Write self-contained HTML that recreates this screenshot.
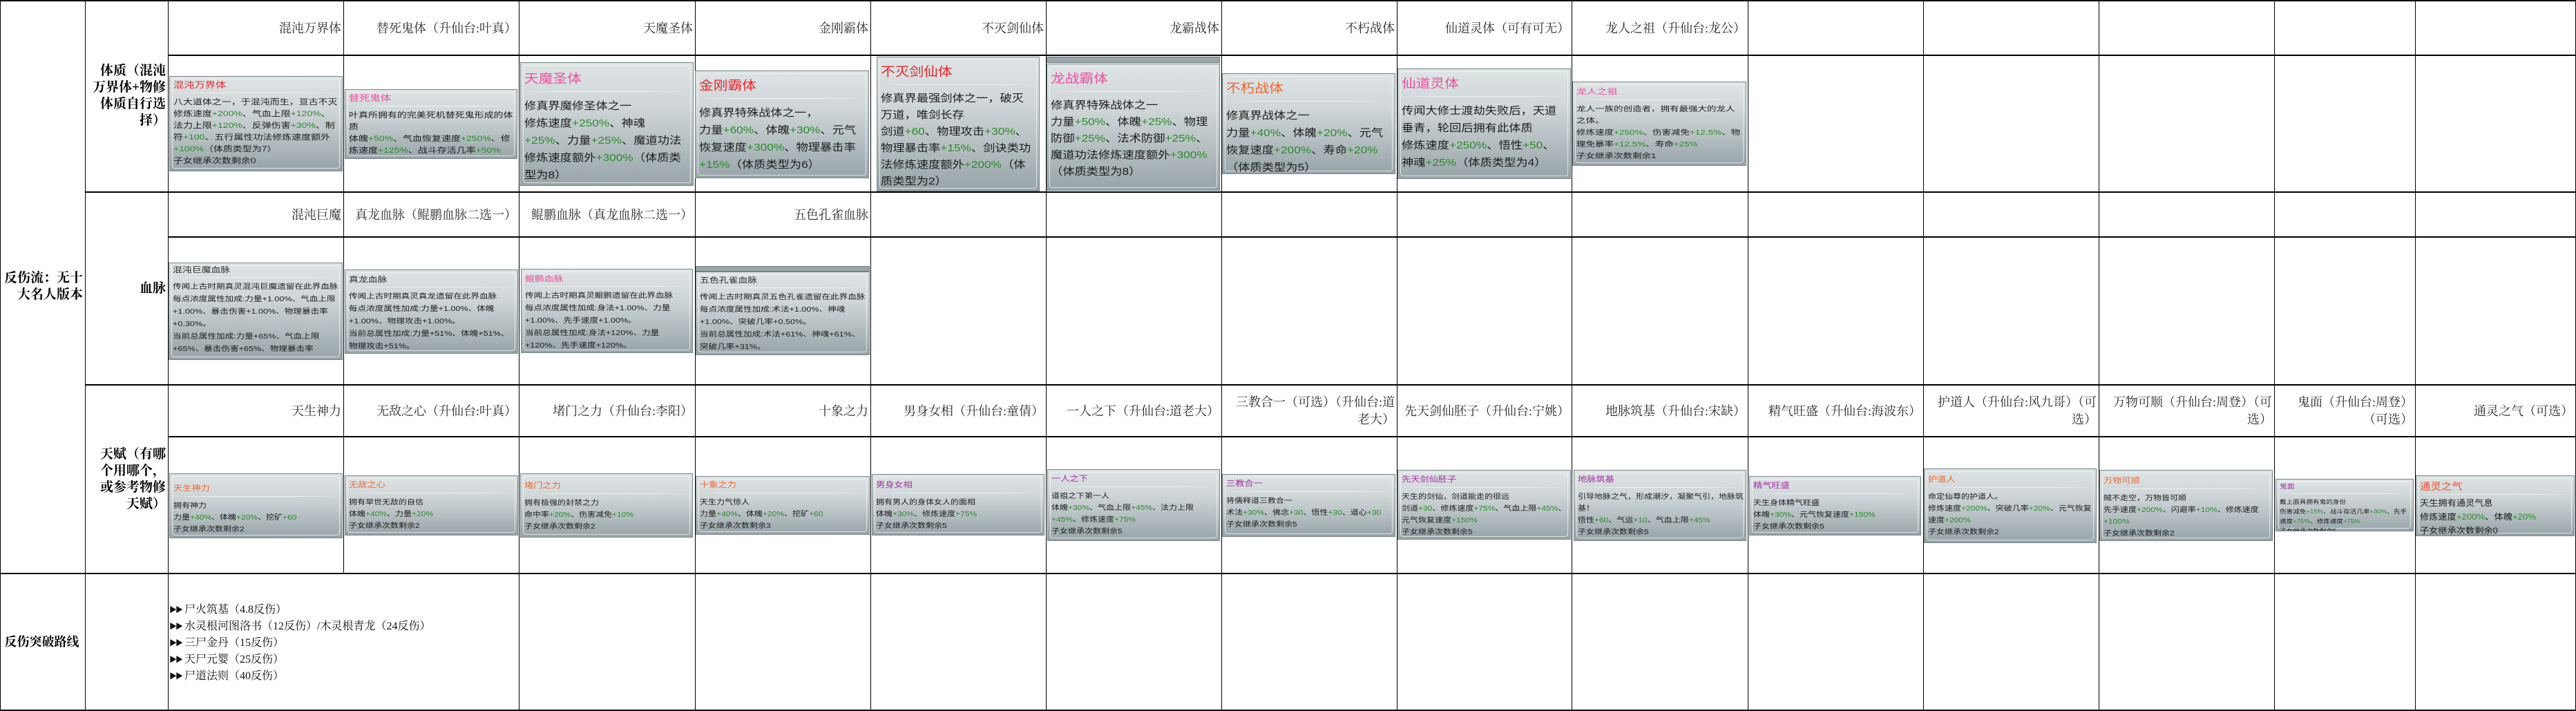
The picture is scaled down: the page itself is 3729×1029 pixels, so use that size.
<!DOCTYPE html>
<html><head><meta charset="utf-8">
<style>
html,body{margin:0;padding:0;background:#fff}
body{width:3729px;height:1029px;position:relative;overflow:hidden;font-family:"Liberation Serif","Noto Serif CJK SC",serif}
.v{position:absolute;width:1px;background:#000}
.h{position:absolute;height:2px;background:#000}
.hd{position:absolute;display:flex;align-items:center;justify-content:flex-end;text-align:right;font-size:18px;line-height:25px;color:#2b2b2b;padding-right:3px;box-sizing:border-box}
.lb{position:absolute;display:flex;align-items:center;justify-content:flex-end;text-align:right;font-weight:bold;font-size:19px;line-height:24px;color:#000;padding-right:3px;box-sizing:border-box}
.card{position:absolute;background:linear-gradient(#dfe4e5 0%,#cfd6d8 35%,#b2bcbf 70%,#98a4a8 100%);border:1px solid #7a878b;overflow:hidden;box-sizing:border-box}
.card:before{content:"";position:absolute;left:3px;top:3px;right:3px;bottom:3px;border:1px solid rgba(240,246,246,.75);border-radius:4px}
.in{position:absolute;left:5px;top:3px;transform-origin:0 0;font-family:"Liberation Sans","Noto Sans CJK SC",sans-serif;color:#1c1c1c}
.sep{height:1px;background:linear-gradient(90deg,rgba(240,244,244,0),#eef2f2 20%,#eef2f2 75%,rgba(240,244,244,0));margin:2px 0 5px}
g{color:#278c27}
.r{color:#e8242c}.p{color:#ee4f9f}.o{color:#f2662e}.u{color:#a62da4}.d{color:#2a2a2a}
.strip{position:absolute;background:#9aa6aa;border:1px solid #6f7c80;box-sizing:border-box}
.list{position:absolute;left:245px;top:871px;font-size:16px;line-height:24px;color:#111}
.list b{font-size:11px;letter-spacing:-2px;margin-right:4px;vertical-align:1px}
</style></head><body>

<!-- grid -->
<div class="v" style="left:0;top:0;height:1029px"></div>
<div class="v" style="left:123px;top:0;height:1029px"></div>
<div class="v" style="left:243px;top:0;height:1029px"></div>
<div class="v" style="left:497px;top:0;height:830px"></div>
<div class="v" style="left:751px;top:0;height:1029px"></div>
<div class="v" style="left:1006px;top:0;height:1029px"></div>
<div class="v" style="left:1260px;top:0;height:1029px"></div>
<div class="v" style="left:1514px;top:0;height:1029px"></div>
<div class="v" style="left:1768px;top:0;height:1029px"></div>
<div class="v" style="left:2022px;top:0;height:1029px"></div>
<div class="v" style="left:2275px;top:0;height:1029px"></div>
<div class="v" style="left:2530px;top:0;height:1029px"></div>
<div class="v" style="left:2784px;top:0;height:1029px"></div>
<div class="v" style="left:3038px;top:0;height:1029px"></div>
<div class="v" style="left:3292px;top:0;height:1029px"></div>
<div class="v" style="left:3496px;top:0;height:1029px"></div>
<div class="v" style="left:3728px;top:0;height:1029px"></div>

<div class="h" style="left:0;top:0;width:3729px"></div>
<div class="h" style="left:243px;top:79px;width:3486px"></div>
<div class="h" style="left:123px;top:277px;width:3606px"></div>
<div class="h" style="left:243px;top:342px;width:3486px"></div>
<div class="h" style="left:123px;top:556px;width:3606px"></div>
<div class="h" style="left:243px;top:631px;width:3486px"></div>
<div class="h" style="left:0;top:829px;width:3729px"></div>
<div class="h" style="left:0;top:1027px;width:3729px"></div>

<!-- labels -->
<div class="lb" style="left:1px;top:0;width:122px;height:830px">反伤流：无十<br>大名人版本</div>
<div class="lb" style="left:124px;top:0;width:119px;height:278px">体质（混沌<br>万界体+物修<br>体质自行选<br>择）</div>
<div class="lb" style="left:124px;top:278px;width:119px;height:279px">血脉</div>
<div class="lb" style="left:124px;top:557px;width:119px;height:273px">天赋（有哪<br>个用哪个，<br>或参考物修<br>天赋）</div>
<div class="lb" style="left:1px;top:830px;width:122px;height:198px;justify-content:center;font-size:18px">反伤突破路线</div>

<!-- headers row1 -->
<div class="hd" style="left:244px;top:2px;width:253px;height:78px">混沌万界体</div>
<div class="hd" style="left:498px;top:2px;width:253px;height:78px">替死鬼体（升仙台:叶真）</div>
<div class="hd" style="left:752px;top:2px;width:254px;height:78px">天魔圣体</div>
<div class="hd" style="left:1007px;top:2px;width:253px;height:78px">金刚霸体</div>
<div class="hd" style="left:1261px;top:2px;width:253px;height:78px">不灭剑仙体</div>
<div class="hd" style="left:1515px;top:2px;width:253px;height:78px">龙霸战体</div>
<div class="hd" style="left:1769px;top:2px;width:253px;height:78px">不朽战体</div>
<div class="hd" style="left:2023px;top:2px;width:252px;height:78px">仙道灵体（可有可无）</div>
<div class="hd" style="left:2276px;top:2px;width:254px;height:78px">龙人之祖（升仙台:龙公）</div>

<!-- headers row2 -->
<div class="hd" style="left:244px;top:279px;width:253px;height:64px">混沌巨魔</div>
<div class="hd" style="left:498px;top:279px;width:253px;height:64px">真龙血脉（鲲鹏血脉二选一）</div>
<div class="hd" style="left:752px;top:279px;width:254px;height:64px">鲲鹏血脉（真龙血脉二选一）</div>
<div class="hd" style="left:1007px;top:279px;width:253px;height:64px">五色孔雀血脉</div>

<!-- headers row3 -->
<div class="hd" style="left:244px;top:558px;width:253px;height:74px">天生神力</div>
<div class="hd" style="left:498px;top:558px;width:253px;height:74px">无敌之心（升仙台:叶真）</div>
<div class="hd" style="left:752px;top:558px;width:254px;height:74px">堵门之力（升仙台:李阳）</div>
<div class="hd" style="left:1007px;top:558px;width:253px;height:74px">十象之力</div>
<div class="hd" style="left:1261px;top:558px;width:253px;height:74px">男身女相（升仙台:童倩）</div>
<div class="hd" style="left:1515px;top:558px;width:253px;height:74px">一人之下（升仙台:道老大）</div>
<div class="hd" style="left:1769px;top:558px;width:253px;height:74px">三教合一（可选）（升仙台:道<br>老大）</div>
<div class="hd" style="left:2023px;top:558px;width:252px;height:74px">先天剑仙胚子（升仙台:宁姚）</div>
<div class="hd" style="left:2276px;top:558px;width:254px;height:74px">地脉筑基（升仙台:宋缺）</div>
<div class="hd" style="left:2531px;top:558px;width:253px;height:74px">精气旺盛（升仙台:海波东）</div>
<div class="hd" style="left:2785px;top:558px;width:253px;height:74px">护道人（升仙台:风九哥）（可<br>选）</div>
<div class="hd" style="left:3039px;top:558px;width:253px;height:74px">万物可顺（升仙台:周登）（可<br>选）</div>
<div class="hd" style="left:3293px;top:558px;width:203px;height:74px">鬼面（升仙台:周登）<br>（可选）</div>
<div class="hd" style="left:3497px;top:558px;width:231px;height:74px">通灵之气（可选）</div>

<!-- row1 cards -->
<div class="card" style="left:245px;top:110px;width:251px;height:138px"><div class="in" style="width:190px;transform:scaleX(1.27);font-size:11px;line-height:17px"><div class="r" style="font-size:12px;line-height:18px">混沌万界体</div><div class="sep"></div>八大道体之一，于混沌而生，亘古不灭<br>修炼速度<g>+200%</g>、气血上限<g>+120%</g>、法力上限<g>+120%</g>、反弹伤害<g>+30%</g>、制符<g>+100</g>、五行属性功法修炼速度额外<g>+100%</g>（体质类型为7）<br>子女继承次数剩余0</div></div>

<div class="card" style="left:499px;top:129px;width:250px;height:101px"><div class="in" style="width:190px;transform:scaleX(1.27);font-size:11px;line-height:17px"><div class="p" style="font-size:12px;line-height:18px">替死鬼体</div><div class="sep"></div>叶真所拥有的完美死机替死鬼形成的体质<br>体魄<g>+50%</g>、气血恢复速度<g>+250%</g>、修炼速度<g>+125%</g>、战斗存活几率<g>+50%</g><br>子女继承次数剩余1</div></div>

<div class="card" style="left:753px;top:90px;width:251px;height:179px"><div class="in" style="width:205px;transform:scaleX(1.15);font-size:15px;line-height:25px;top:6px"><div class="p" style="font-size:18px;line-height:34px">天魔圣体</div><div class="sep" style="margin:1px 0 8px"></div>修真界魔修圣体之一<br>修炼速度<g>+250%</g>、神魂<g>+25%</g>、力量<g>+25%</g>、魔道功法修炼速度额外<g>+300%</g>（体质类型为8）</div></div>

<div class="card" style="left:1006px;top:102px;width:252px;height:156px"><div class="in" style="width:205px;transform:scaleX(1.15);font-size:15px;line-height:25px;top:4px"><div class="r" style="font-size:18px;line-height:34px">金刚霸体</div><div class="sep" style="margin:1px 0 8px"></div>修真界特殊战体之一，<br>力量<g>+60%</g>、体魄<g>+30%</g>、元气恢复速度<g>+300%</g>、物理暴击率<g>+15%</g>（体质类型为6）</div></div>

<div class="card" style="left:1269px;top:82px;width:236px;height:195px"><div class="in" style="width:192px;transform:scaleX(1.15);font-size:15px;line-height:24px;top:4px"><div class="r" style="font-size:18px;line-height:34px">不灭剑仙体</div><div class="sep" style="margin:1px 0 8px"></div>修真界最强剑体之一，破灭万道，唯剑长存<br>剑道<g>+60</g>、物理攻击<g>+30%</g>、物理暴击率<g>+15%</g>、剑诀类功法修炼速度额外<g>+200%</g>（体质类型为2）</div></div>

<div class="strip" style="left:1515px;top:82px;width:251px;height:9px"></div>
<div class="card" style="left:1515px;top:92px;width:251px;height:184px"><div class="in" style="width:205px;transform:scaleX(1.15);font-size:15px;line-height:24px;top:4px"><div class="p" style="font-size:18px;line-height:34px">龙战霸体</div><div class="sep" style="margin:1px 0 8px"></div>修真界特殊战体之一<br>力量<g>+50%</g>、体魄<g>+25%</g>、物理防御<g>+25%</g>、法术防御<g>+25%</g>、魔道功法修炼速度额外<g>+300%</g>（体质类型为8）</div></div>

<div class="card" style="left:1769px;top:106px;width:251px;height:146px"><div class="in" style="width:205px;transform:scaleX(1.15);font-size:15px;line-height:25px;top:4px"><div class="o" style="font-size:18px;line-height:34px">不朽战体</div><div class="sep" style="margin:1px 0 8px"></div>修真界战体之一<br>力量<g>+40%</g>、体魄<g>+20%</g>、元气恢复速度<g>+200%</g>、寿命<g>+20%</g>（体质类型为5）</div></div>

<div class="card" style="left:2023px;top:99px;width:251px;height:160px"><div class="in" style="width:205px;transform:scaleX(1.15);font-size:15px;line-height:25px;top:4px"><div class="p" style="font-size:18px;line-height:34px">仙道灵体</div><div class="sep" style="margin:1px 0 8px"></div>传闻大修士渡劫失败后，天道垂青，轮回后拥有此体质<br>修炼速度<g>+250%</g>、悟性<g>+50</g>、神魂<g>+25%</g>（体质类型为4）</div></div>

<div class="card" style="left:2276px;top:118px;width:252px;height:122px"><div class="in" style="width:178px;transform:scaleX(1.35);font-size:10px;line-height:17px;top:5px"><div class="p" style="font-size:11px;line-height:18px">龙人之祖</div><div class="sep"></div>龙人一族的创造者，拥有最强大的龙人之体。<br>修炼速度<g>+250%</g>、伤害减免<g>+12.5%</g>、物理免暴率<g>+12.5%</g>、寿命<g>+25%</g><br>子女继承次数剩余1</div></div>

<!-- row2 cards -->
<div class="card" style="left:244px;top:380px;width:252px;height:141px"><div class="in" style="width:192px;transform:scaleX(1.26);font-size:10px;line-height:18px;top:2px"><div class="d" style="font-size:11px;line-height:16px">混沌巨魔血脉</div><div class="sep"></div>传闻上古时期真灵混沌巨魔遗留在此界血脉<br>每点浓度属性加成:力量+1.00%、气血上限+1.00%、暴击伤害+1.00%、物理暴击率+0.30%。<br>当前总属性加成:力量+65%、气血上限+65%、暴击伤害+65%、物理暴击率</div></div>

<div class="card" style="left:499px;top:390px;width:251px;height:122px"><div class="in" style="width:192px;transform:scaleX(1.26);font-size:10px;line-height:18px;top:6px"><div class="d" style="font-size:11px;line-height:16px">真龙血脉</div><div class="sep"></div>传闻上古时期真灵真龙遗留在此界血脉<br>每点浓度属性加成:力量+1.00%、体魄+1.00%、物理攻击+1.00%。<br>当前总属性加成:力量+51%、体魄+51%、物理攻击+51%。</div></div>

<div class="card" style="left:754px;top:389px;width:249px;height:122px"><div class="in" style="width:190px;transform:scaleX(1.26);font-size:10px;line-height:18px;top:6px"><div class="p" style="font-size:11px;line-height:16px">鲲鹏血脉</div><div class="sep"></div>传闻上古时期真灵鲲鹏遗留在此界血脉<br>每点浓度属性加成:身法+1.00%、力量+1.00%、先手速度+1.00%。<br>当前总属性加成:身法+120%、力量+120%、先手速度+120%。</div></div>

<div class="strip" style="left:1007px;top:385px;width:252px;height:8px"></div>
<div class="card" style="left:1007px;top:393px;width:252px;height:121px"><div class="in" style="width:192px;transform:scaleX(1.26);font-size:10px;line-height:18px;top:4px"><div class="d" style="font-size:11px;line-height:16px">五色孔雀血脉</div><div class="sep"></div>传闻上古时期真灵五色孔雀遗留在此界血脉<br>每点浓度属性加成:术法+1.00%、神魂+1.00%、突破几率+0.50%。<br>当前总属性加成:术法+61%、神魂+61%、突破几率+31%。</div></div>

<!-- row3 cards -->
<div class="card" style="left:245px;top:685px;width:251px;height:94px"><div class="in" style="width:200px;transform:scaleX(1.2);font-size:10px;line-height:17px;top:12px"><div class="o" style="font-size:11px;line-height:18px">天生神力</div><div class="sep"></div>拥有神力<br>力量<g>+40%</g>、体魄<g>+20%</g>、挖矿<g>+60</g><br>子女继承次数剩余2</div></div>

<div class="card" style="left:499px;top:688px;width:251px;height:87px"><div class="in" style="width:200px;transform:scaleX(1.2);font-size:10px;line-height:17px;top:4px"><div class="o" style="font-size:11px;line-height:18px">无敌之心</div><div class="sep"></div>拥有举世无敌的自信<br>体魄<g>+40%</g>、力量<g>+20%</g><br>子女继承次数剩余2</div></div>

<div class="card" style="left:753px;top:685px;width:250px;height:93px"><div class="in" style="width:200px;transform:scaleX(1.2);font-size:10px;line-height:17px;top:8px"><div class="o" style="font-size:11px;line-height:18px">堵门之力</div><div class="sep"></div>拥有极强的封禁之力<br>命中率<g>+20%</g>、伤害减免<g>+10%</g><br>子女继承次数剩余2</div></div>

<div class="card" style="left:1007px;top:689px;width:252px;height:85px"><div class="in" style="width:200px;transform:scaleX(1.2);font-size:10px;line-height:17px;top:3px"><div class="o" style="font-size:11px;line-height:18px">十象之力</div><div class="sep"></div>天生力气惊人<br>力量<g>+40%</g>、体魄<g>+20%</g>、挖矿<g>+60</g><br>子女继承次数剩余3</div></div>

<div class="card" style="left:1262px;top:686px;width:250px;height:89px"><div class="in" style="width:200px;transform:scaleX(1.2);font-size:10px;line-height:17px;top:6px"><div class="u" style="font-size:11px;line-height:18px">男身女相</div><div class="sep"></div>拥有男人的身体女人的面相<br>体魄<g>+30%</g>、修炼速度<g>+75%</g><br>子女继承次数剩余5</div></div>

<div class="card" style="left:1516px;top:679px;width:250px;height:104px"><div class="in" style="width:200px;transform:scaleX(1.2);font-size:10px;line-height:17px;top:4px"><div class="u" style="font-size:11px;line-height:18px">一人之下</div><div class="sep"></div>道祖之下第一人<br>体魄<g>+30%</g>、气血上限<g>+45%</g>、法力上限<g>+45%</g>、修炼速度<g>+75%</g><br>子女继承次数剩余5</div></div>

<div class="card" style="left:1769px;top:686px;width:251px;height:91px"><div class="in" style="width:200px;transform:scaleX(1.2);font-size:10px;line-height:17px;top:4px"><div class="u" style="font-size:11px;line-height:18px">三教合一</div><div class="sep"></div>将儒释道三教合一<br>术法<g>+30%</g>、佛念<g>+30</g>、悟性<g>+30</g>、道心<g>+30</g><br>子女继承次数剩余5</div></div>

<div class="card" style="left:2023px;top:680px;width:251px;height:101px"><div class="in" style="width:200px;transform:scaleX(1.2);font-size:10px;line-height:17px;top:4px"><div class="u" style="font-size:11px;line-height:18px">先天剑仙胚子</div><div class="sep"></div>天生的剑仙，剑道能走的很远<br>剑道<g>+30</g>、修炼速度<g>+75%</g>、气血上限<g>+45%</g>、元气恢复速度<g>+150%</g><br>子女继承次数剩余5</div></div>

<div class="card" style="left:2278px;top:680px;width:250px;height:103px"><div class="in" style="width:200px;transform:scaleX(1.2);font-size:10px;line-height:17px;top:4px"><div class="u" style="font-size:11px;line-height:18px">地脉筑基</div><div class="sep"></div>引导地脉之气，形成潮汐，凝聚气引，地脉筑基！<br>悟性<g>+60</g>、气运<g>+10</g>、气血上限<g>+45%</g><br>子女继承次数剩余5</div></div>

<div class="card" style="left:2532px;top:689px;width:249px;height:86px"><div class="in" style="width:199px;transform:scaleX(1.2);font-size:10px;line-height:17px;top:4px"><div class="u" style="font-size:11px;line-height:18px">精气旺盛</div><div class="sep"></div>天生身体精气旺盛<br>体魄<g>+30%</g>、元气恢复速度<g>+150%</g><br>子女继承次数剩余5</div></div>

<div class="card" style="left:2785px;top:678px;width:250px;height:108px"><div class="in" style="width:200px;transform:scaleX(1.2);font-size:10px;line-height:17px;top:6px"><div class="o" style="font-size:11px;line-height:18px">护道人</div><div class="sep"></div>命定仙尊的护道人。<br>修炼速度<g>+200%</g>、突破几率<g>+20%</g>、元气恢复速度<g>+200%</g><br>子女继承次数剩余2</div></div>

<div class="card" style="left:3039px;top:680px;width:251px;height:103px"><div class="in" style="width:200px;transform:scaleX(1.2);font-size:10px;line-height:17px;top:6px"><div class="o" style="font-size:11px;line-height:18px">万物可顺</div><div class="sep"></div>贼不走空，万物皆可顺<br>先手速度<g>+200%</g>、闪避率<g>+10%</g>、修炼速度<g>+100%</g><br>子女继承次数剩余2</div></div>

<div class="card" style="left:3294px;top:693px;width:200px;height:76px"><div class="in" style="width:158px;transform:scaleX(1.2);font-size:8px;line-height:14px;top:3px"><div class="u" style="font-size:9px;line-height:15px">鬼面</div><div class="sep"></div>戴上面具拥有鬼的身份<br>伤害减免<g>+15%</g>、战斗存活几率<g>+30%</g>、先手速度<g>+75%</g>、修炼速度<g>+75%</g><br>子女继承次数剩余5</div></div>

<div class="card" style="left:3497px;top:688px;width:230px;height:88px"><div class="in" style="width:200px;transform:scaleX(1.1);font-size:12px;line-height:20px;top:4px"><div class="o" style="font-size:14px;line-height:22px;color:#f04a2a">通灵之气</div><div class="sep" style="margin:0 0 2px"></div>天生拥有通灵气息<br>修炼速度<g>+200%</g>、体魄<g>+20%</g><br>子女继承次数剩余0</div></div>

<!-- row4 list -->
<div class="list">
<div><b>▶▶</b>尸火筑基（4.8反伤）</div>
<div><b>▶▶</b>水灵根河图洛书（12反伤）/木灵根青龙（24反伤）</div>
<div><b>▶▶</b>三尸金丹（15反伤）</div>
<div><b>▶▶</b>天尸元婴（25反伤）</div>
<div><b>▶▶</b>尸道法则（40反伤）</div>
</div>

</body></html>
